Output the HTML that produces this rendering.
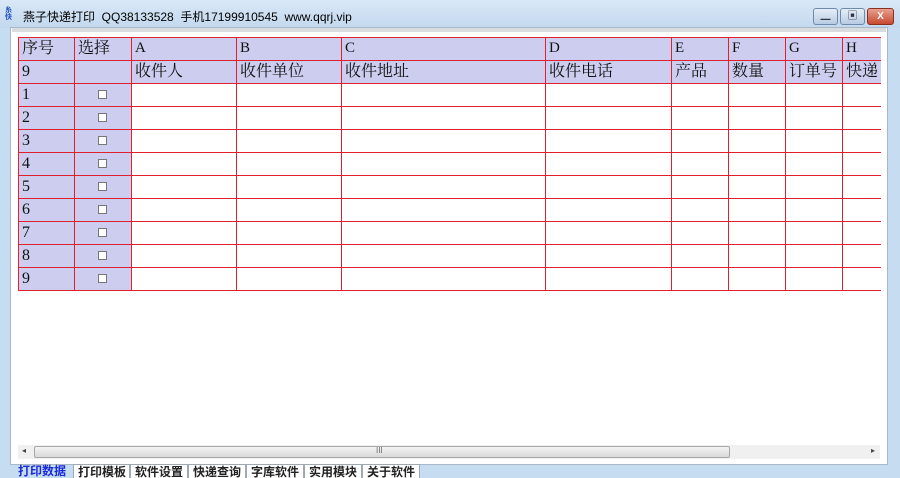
<!DOCTYPE html><html><head><meta charset="utf-8"><style>
*{margin:0;padding:0;box-sizing:border-box}
body{width:900px;height:474px;overflow:hidden;background:#c6dcf0;font-family:"Liberation Sans","Noto Sans CJK SC",sans-serif;position:relative}
.a{position:absolute}
#title{left:0;top:0;width:900px;height:28px;background:linear-gradient(#d9e8f7,#c3d8ee)}
#panel{left:10px;top:27px;width:878px;height:438px;background:#fff;border:1px solid #a8b8c8}
.c{position:absolute;border:1px solid #e0202c;font-family:"Liberation Serif","Noto Serif CJK SC",serif;font-size:16px;line-height:21px;padding-left:3px;color:#111;white-space:nowrap;overflow:hidden}
.h{background:#cdcdf0}
.cb{position:absolute;width:9px;height:9px;border:1px solid #777;background:#fff}
.tab{position:absolute;top:464px;height:14px;border:1px solid #a0a8b0;border-bottom:none;background:#fff;font-size:12px;font-weight:bold;line-height:14px;padding-left:4px;color:#222;overflow:hidden}
.btn{position:absolute;top:8px;height:17px;border:1px solid #6e8aab;border-radius:3px;background:linear-gradient(#e6eef8,#b8cbe3);font-size:10px;text-align:center;line-height:15px;color:#334}
</style></head><body>
<div id="title" class="a"></div>
<div class="a" style="left:5px;top:7px;width:12px;height:14px;color:#2050c0;font-size:7px;line-height:7px;font-weight:bold">糸<br>快</div>
<div class="a" style="left:23px;top:8px;font-size:12px;color:#000;white-space:nowrap">燕子快递打印&nbsp;&nbsp;QQ38133528&nbsp;&nbsp;手机17199910545&nbsp;&nbsp;www.qqrj.vip</div>
<div class="btn" style="left:813px;width:25px">▁</div>
<div class="btn" style="left:840px;width:25px">▣</div>
<div class="btn" style="left:867px;width:27px;background:linear-gradient(#e8a090,#c84a30);border-color:#8a3020;color:#fff;font-weight:bold">X</div>
<div id="panel" class="a"></div>
<div class="a" style="left:12px;top:28px;width:874px;height:4px;background:#d8dcde"></div>
<div id="t"></div>
<div class="a" style="left:18px;top:445px;width:862px;height:14px;background:#f0f0f0"></div>
<div class="a" style="left:34px;top:446px;width:696px;height:12px;border:1px solid #a8a8a8;border-radius:2px;background:linear-gradient(#f4f4f4,#d8d8d8)"></div>
<div class="a" style="left:376px;top:446px;font-size:8px;color:#666">III</div>
<div class="a" style="left:22px;top:446px;font-size:8px;color:#444">◂</div>
<div class="a" style="left:871px;top:446px;font-size:8px;color:#444">▸</div>
<div class="tab" style="left:14px;width:59px;border:none;background:transparent;color:#1a2ad8">打印数据</div>
<div class="tab" style="left:73px;width:57px">打印模板</div>
<div class="tab" style="left:130px;width:58px">软件设置</div>
<div class="tab" style="left:188px;width:58px">快递查询</div>
<div class="tab" style="left:246px;width:58px">字库软件</div>
<div class="tab" style="left:304px;width:58px">实用模块</div>
<div class="tab" style="left:362px;width:58px">关于软件</div>
<script>
var xs=[18,74,131,236,341,545,671,728,785,842,881];
var r1=["序号","选择","A","B","C","D","E","F","G","H"];
var r2=["9","","收件人","收件单位","收件地址","收件电话","产品","数量","订单号","快递"];
var h="";
for(var r=0;r<11;r++){var y=37+r*23;
for(var i=0;i<10;i++){var w=xs[i+1]-xs[i]+1;var t="";var cls="c";
if(r==0){t=r1[i];cls+=" h"}else if(r==1){t=r2[i];cls+=" h"}else{if(i==0)t=r-1;if(i<2)cls+=" h"}
var fs=(r<2&&/[A-H]/.test(t)&&t.length==1)?"font-size:15px;":"";
h+='<div class="'+cls+'" style="'+fs+'left:'+xs[i]+'px;top:'+y+'px;width:'+(i==9?w-1:w)+'px;height:24px;'+(i==9?'border-right:none':'')+'">'+t+'</div>';
if(r>=2&&i==1)h+='<div class="cb" style="left:98px;top:'+(y+7)+'px"></div>';}}
document.getElementById("t").innerHTML=h;
</script>
</body></html>
